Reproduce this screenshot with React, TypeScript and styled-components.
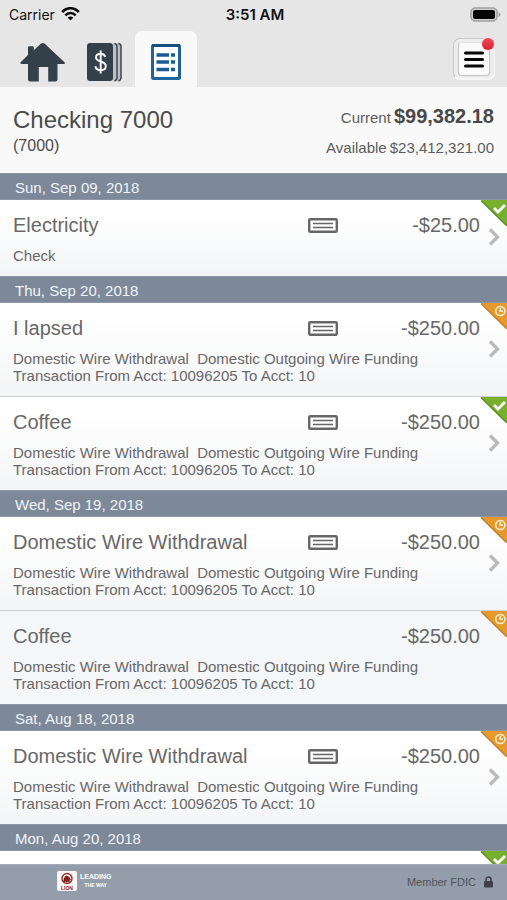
import React from "react";
import styled, { createGlobalStyle } from "styled-components";

const GlobalStyle = createGlobalStyle`
  * { box-sizing: border-box; }
  body {
    margin: 0;
    background: #e6e6e6;
    color: #686868;
    font-family: "Liberation Sans", Arial, Helvetica, sans-serif;
    font-size: 15px;
  }
  button { font: inherit; color: inherit; border: 0; padding: 0; background: none; cursor: pointer; }
  h1, h2, h3, p, ul, dl, dd { margin: 0; padding: 0; font-weight: 400; }
  svg { display: block; flex: none; }
`;

const Screen = styled.div`
  display: flex;
  flex-direction: column;
  height: 100vh;
`;

const StatusBar = styled.div`
  display: grid;
  grid-template-columns: 1fr auto 1fr;
  align-items: center;
  height: 28px;
  padding: 0 6px 0 9px;
  color: #111;
  font-family: Inter, sans-serif;
  font-size: 14px;
`;

const Carrier = styled.div`
  display: flex;
  align-items: center;
  gap: 6px;
`;

const Clock = styled.time`
  font-size: 15px;
  font-weight: 600;
`;

const Battery = styled.svg`
  justify-self: end;
`;

const TopBar = styled.div`
  display: flex;
  justify-content: space-between;
  height: 59px;
  padding: 3px 12px 0 11px;
`;

const Tabs = styled.nav`
  display: flex;
`;

const Tab = styled.button<{ $active?: boolean }>`
  display: flex;
  align-items: center;
  justify-content: center;
  width: 62px;
  padding-top: 6px;
  border-radius: 7px 7px 0 0;
  background: ${(p) => (p.$active ? "#f9f9f9" : "transparent")};
`;

const MenuButton = styled.button`
  position: relative;
  display: flex;
  align-items: center;
  justify-content: center;
  width: 42px;
  height: 42px;
  margin-top: 7px;
  border: 1px solid #c9c9c9;
  border-right-color: #f6f6f6;
  border-bottom: 2px solid #f8f8f8;
  border-radius: 7px;
  background: #ececec;
`;

const MenuFace = styled.span`
  display: flex;
  align-items: center;
  justify-content: center;
  width: 32px;
  height: 34px;
  border: 1px solid #c4c4c4;
  border-top-color: #e4e4e4;
  border-radius: 4px;
  background: #fafafa;
`;

const Alert = styled.span`
  position: absolute;
  top: -1px;
  right: 0;
  width: 12px;
  height: 12px;
  border-radius: 50%;
  background: linear-gradient(#f04a5c, #de1f33);
  box-shadow: 0 0 0 1px #f2dfe1;
`;

const Account = styled.header`
  display: flex;
  justify-content: space-between;
  height: 86px;
  padding: 18px 13px 0;
  background: #f9f9f9;
  color: #4b4b4b;
  flex: none;
`;

const AccountName = styled.h1`
  font-size: 24px;
  line-height: 30px;
`;

const AccountNumber = styled.p`
  font-size: 16px;
  line-height: 22px;
`;

const Balances = styled.dl`
  color: #5c5c5c;
`;

const Balance = styled.div`
  display: flex;
  align-items: baseline;
  justify-content: flex-end;
  gap: 3px;
  height: 32px;
  line-height: 22px;
`;

const CurrentAmount = styled.dd`
  color: #484848;
  font-size: 20px;
  font-weight: 700;
`;

const Activity = styled.main`
  flex: 1;
  min-height: 0;
  overflow: hidden;
  background: #fff;
`;

const DateBar = styled.h2`
  height: 27px;
  padding-left: 15px;
  border-top: 1px solid #8d97a6;
  border-bottom: 1px solid #8d97a6;
  background: #7d8999;
  color: #f0f4fa;
  font-size: 15px;
  line-height: 27px;
`;

const List = styled.ul`
  list-style: none;
`;

const Item = styled.li`
  position: relative;
  & + & { border-top: 1px solid #cccfd3; }
`;

const Row = styled.button<{ $quiet: boolean }>`
  display: flex;
  width: 100%;
  padding: 14px 0 12px 13px;
  background: ${(p) => (p.$quiet ? "#f4f6f8" : "linear-gradient(#ffffff 15%, #f4f5f7)")};
  text-align: left;
`;

const RowBody = styled.span`
  flex: 1;
  min-width: 0;
`;

const Summary = styled.span`
  display: grid;
  grid-template-columns: 1fr 30px 142px;
  align-items: center;
  height: 23px;
  margin-bottom: 10px;
  font-size: 20px;
  line-height: 23px;
`;

const Amount = styled.span`
  grid-column: 3;
  text-align: right;
`;

const Detail = styled.span`
  display: block;
  line-height: 17px;
  white-space: pre-wrap;
`;

const Next = styled.span`
  display: flex;
  align-self: center;
  justify-content: center;
  width: 27px;
  padding-bottom: 4px;
`;

const Corner = styled.svg`
  position: absolute;
  top: 0;
  right: 0;
`;

const Footer = styled.footer`
  display: flex;
  align-items: center;
  justify-content: space-between;
  flex: none;
  height: 36px;
  padding: 0 14px 0 57px;
  border-top: 1px solid #a5adb8;
  background: #949eaa;
  color: #4e545c;
  font-size: 11px;
`;

const Brand = styled.div`
  display: flex;
  align-items: center;
  gap: 3px;
  padding-bottom: 3px;
  color: #fff;
  font-size: 7px;
  font-weight: 700;
  line-height: 8px;
  text-align: center;
`;

const Tagline = styled.span`
  display: block;
  font-size: 5px;
`;

const Member = styled.div`
  display: flex;
  align-items: center;
  gap: 8px;
  padding-bottom: 2px;
`;

const WifiIcon = () => (
  <svg width="19" height="14" viewBox="0 0 19 14" fill="none" stroke="#0c0c0c" strokeWidth="2.6" aria-hidden="true">
    <path d="M1.2 5.2C6-.1 13-.1 17.8 5.2M4.3 8.3c3-3.1 7.4-3.1 10.4 0" />
    <path d="M9.5 13.6 6.7 10.7c1.6-1.5 4-1.5 5.6 0z" fill="#0c0c0c" stroke="none" />
  </svg>
);

const HomeIcon = () => (
  <svg width="45" height="40" viewBox="0 0 45 40" aria-hidden="true">
    <path
      d="M20.8 1.8a3 3 0 0 1 4 0L44.5 20.2c.8.8.5 1.8-.6 1.8h-6.4v15.5a2 2 0 0 1-2 2h-7.3V25h-9.4v14.500H10a2 2 0 0 1-2-2V22H1.4C.2 22-.1 21 .7 20.2L8 13V5.500c0-.9.5-1.300 1.300-1.300h3.200c.9 0 1.300.5 1.300 1.300v2.800z"
      fill="#35414a"
    />
  </svg>
);

const LedgerIcon = () => (
  <svg width="36" height="40" viewBox="0 0 36 40" aria-hidden="true">
    <path d="M27 1h2.500q2 .5 2 3v32q0 2.500-2 3H27zM31 1h2.500q2 .5 2 3v32q0 2.500-2 3H31z" fill="#bcc0c5" />
    <rect x="1" y="1" width="26" height="38" rx="3" fill="#35414a" />
    <path d="M28.500 1.500q2.500.5 2.500 3v31q0 2.500-2.500 3.500M32.500 1.500q2.500.5 2.500 3v31q0 2.500-2.500 3.500" fill="none" stroke="#3f4a53" strokeWidth="1.5" />
    <path d="M19.300 15c-.5-2-2.200-3.300-4.600-3.300-2.700 0-4.700 1.400-4.700 3.800 0 5.200 9.800 2.700 9.800 8.500 0 2.600-2.200 4.200-5.100 4.200-2.800 0-4.900-1.300-5.400-3.900M14.700 8.500v23" fill="none" stroke="#f4f5f6" strokeWidth="2" />
  </svg>
);

const StatementIcon = () => (
  <svg width="30" height="36" viewBox="0 0 30 36" aria-hidden="true">
    <rect x="1.5" y="1.5" width="27" height="33" rx="1" fill="#fff" stroke="#1f639e" strokeWidth="3" />
    <path d="M1 1.5h28" stroke="#174f80" strokeWidth="3" />
    <path d="M5.5 11H18M5.500 18H18M5.500 25.500H18M20 11h4M20 18h4M20 25.500h4" stroke="#1b5c96" strokeWidth="3.6" />
  </svg>
);

const CheckIcon = () => (
  <svg width="30" height="16" viewBox="0 0 30 16" fill="none" stroke="#666" role="img" aria-label="Check">
    <rect x="1.2" y="1.2" width="27.600" height="12.600" rx="1" strokeWidth="2.400" />
    <path d="M5 5.500h20M5 9.500h20" strokeWidth="1.5" />
  </svg>
);

const Chevron = () => (
  <svg width="12" height="18" viewBox="0 0 12 18" fill="none" stroke="#bababa" strokeWidth="3.4" aria-hidden="true">
    <path d="M2 1.500l7.500 7.500L2 16.500" />
  </svg>
);

type Status = "done" | "pending";

const StatusCorner = ({ status }: { status: Status }) => (
  <Corner width="26" height="26" viewBox="0 0 26 26" fill="none" role="img" aria-label={status}>
    <path d="M0 0h26v26z" fill={status === "done" ? "#77b02d" : "#e69a2d"} />
    <path d="M0 .5 26 26" stroke={status === "done" ? "#5b8f1d" : "#bf8027"} strokeWidth="1.5" />
    {status === "done" ? (
      <path d="M13 8l4 4 7-7" stroke="#fff" strokeWidth="2.8" />
    ) : (
      <g stroke="#fff1d5" strokeWidth="1.5">
        <circle cx="19.300" cy="8" r="4.600" />
        <path d="M19.300 5v3.300h2.700" />
      </g>
    )}
  </Corner>
);

const LockIcon = () => (
  <svg width="9" height="12" viewBox="0 0 9 12" aria-hidden="true">
    <path d="M2 6V3.500a2.500 2.500 0 0 1 5 0V6" fill="none" stroke="#3e4248" strokeWidth="1.5" />
    <rect x="0" y="5" width="9" height="6.500" rx="1" fill="#3e4248" />
  </svg>
);

const LionLogo = () => (
  <svg width="20" height="20" viewBox="0 0 20 20" aria-hidden="true">
    <rect width="20" height="20" rx="2" fill="#fbf7f7" />
    <circle cx="10" cy="7.500" r="5" fill="none" stroke="#96302d" strokeWidth="1.4" />
    <path d="M6.500 11.500c-.5-3 .5-6 3-7l3 1.500 1.500 3-1.500.5.5 2.500-2-1.500-1 1.500-1-1.500z" fill="#7c201f" />
    <text x="10" y="18.500" textAnchor="middle" fontFamily="Liberation Sans, sans-serif" fontSize="5" fontWeight="700" fill="#922522">LION</text>
  </svg>
);

type Transaction = { name: string; amount: string; detail: string[]; status: Status; check?: boolean; open?: boolean };

const wire = ["Domestic Wire Withdrawal  Domestic Outgoing Wire Funding", "Transaction From Acct: 10096205 To Acct: 10"];

const days: { date: string; items: Transaction[] }[] = [
  { date: "Sun, Sep 09, 2018", items: [{ name: "Electricity", amount: "-$25.00", detail: ["Check"], status: "done", check: true, open: true }] },
  {
    date: "Thu, Sep 20, 2018",
    items: [
      { name: "I lapsed", amount: "-$250.00", detail: wire, status: "pending", check: true, open: true },
      { name: "Coffee", amount: "-$250.00", detail: wire, status: "done", check: true, open: true },
    ],
  },
  {
    date: "Wed, Sep 19, 2018",
    items: [
      { name: "Domestic Wire Withdrawal", amount: "-$250.00", detail: wire, status: "pending", check: true, open: true },
      { name: "Coffee", amount: "-$250.00", detail: wire, status: "pending" },
    ],
  },
  { date: "Sat, Aug 18, 2018", items: [{ name: "Domestic Wire Withdrawal", amount: "-$250.00", detail: wire, status: "pending", check: true, open: true }] },
  { date: "Mon, Aug 20, 2018", items: [{ name: "", amount: "", detail: [], status: "done", open: true }] },
];

const TransactionRow = ({ item }: { item: Transaction }) => (
  <Item>
    <Row type="button" $quiet={!item.open}>
      <RowBody>
        <Summary>
          <span>{item.name}</span>
          {item.check && <CheckIcon />}
          <Amount>{item.amount}</Amount>
        </Summary>
        {item.detail.map((line) => (
          <Detail key={line}>{line}</Detail>
        ))}
      </RowBody>
      <Next>{item.open && <Chevron />}</Next>
    </Row>
    <StatusCorner status={item.status} />
  </Item>
);

export default function App() {
  return (
    <>
      <GlobalStyle />
      <Screen>
        <StatusBar>
          <Carrier>
            Carrier <WifiIcon />
          </Carrier>
          <Clock>3:51 AM</Clock>
          <Battery width="31" height="15" viewBox="0 0 31 15" aria-hidden="true">
            <rect x="1" y="1" width="26" height="13" rx="4" fill="#d2d2d2" stroke="#a0a0a0" strokeWidth="1.5" />
            <rect x="3" y="3" width="22" height="9" rx="2" fill="#050505" />
            <path d="M28.500 5q2 1 2 2.500t-2 2.500z" fill="#a0a0a0" />
          </Battery>
        </StatusBar>
        <TopBar>
          <Tabs>
            <Tab type="button" aria-label="Home"><HomeIcon /></Tab>
            <Tab type="button" aria-label="Accounts"><LedgerIcon /></Tab>
            <Tab type="button" aria-label="Activity" $active><StatementIcon /></Tab>
          </Tabs>
          <MenuButton type="button" aria-label="Menu">
            <MenuFace>
              <svg width="20" height="18" viewBox="0 0 20 18" stroke="#080808" strokeWidth="3" strokeLinecap="round" aria-hidden="true">
                <path d="M1.500 3h17M1.500 9.500h17M1.500 16h17" />
              </svg>
            </MenuFace>
            <Alert />
          </MenuButton>
        </TopBar>
        <Account>
          <div>
            <AccountName>Checking 7000</AccountName>
            <AccountNumber>(7000)</AccountNumber>
          </div>
          <Balances>
            <Balance>
              <dt>Current</dt>
              <CurrentAmount>$99,382.18</CurrentAmount>
            </Balance>
            <Balance>
              <dt>Available</dt>
              <dd>$23,412,321.00</dd>
            </Balance>
          </Balances>
        </Account>
        <Activity>
          {days.map((day) => (
            <section key={day.date}>
              <DateBar>{day.date}</DateBar>
              <List>
                {day.items.map((item, i) => (
                  <TransactionRow key={i} item={item} />
                ))}
              </List>
            </section>
          ))}
        </Activity>
        <Footer>
          <Brand>
            <LionLogo />
            <span>
              LEADING
              <Tagline>THE WAY</Tagline>
            </span>
          </Brand>
          <Member>
            Member FDIC <LockIcon />
          </Member>
        </Footer>
      </Screen>
    </>
  );
}
